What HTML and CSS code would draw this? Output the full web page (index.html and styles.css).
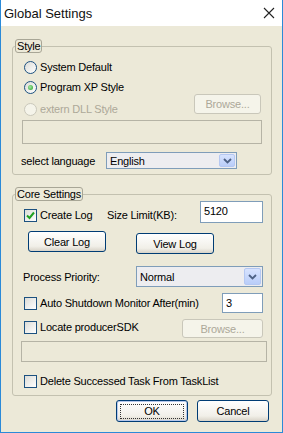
FILE: index.html
```html
<!DOCTYPE html>
<html lang="en">
<head>
  <meta charset="UTF-8">
  <meta name="viewport" content="width=device-width, initial-scale=1.0">
  <title>Global Settings</title>
  <link rel="stylesheet" href="styles.css">
</head>
<body>
  <div class="window">
    <div class="titlebar">
      <span class="title">Global Settings</span>
      <svg class="close" viewBox="0 0 12 12" width="12" height="12">
        <path d="M1 1 L11 11 M11 1 L1 11" stroke="#222" stroke-width="1.1" fill="none"/>
      </svg>
    </div>

    <div class="client">
      <fieldset class="group">
        <legend>Style</legend>
        <div class="group-body style-body">
          <label class="opt"><span class="radio"></span>System Default</label>
          <label class="opt row-gap"><span class="radio on"></span>Program XP Style</label>
          <div class="row dll-row">
            <label class="opt disabled"><span class="radio"></span>extern DLL Style</label>
            <button class="btn browse-style" disabled>Browse...</button>
          </div>
          <div class="edit disabled style-path"></div>
          <div class="row lang-row">
            <span class="lang-label">select language</span>
            <div class="combo lang-combo">
              <span class="combo-text">English</span>
              <span class="drop">
                <svg viewBox="0 0 9 6" width="9" height="6"><path d="M1 1 L4.5 4.5 L8 1" stroke="#4d6185" stroke-width="1.8" fill="none"/></svg>
              </span>
            </div>
          </div>
        </div>
      </fieldset>

      <fieldset class="group core">
        <legend>Core Settings</legend>
        <div class="group-body core-body">
          <div class="row log-row">
            <label class="opt size-opt"><span class="check on">
              <svg viewBox="0 0 11 11" width="11" height="11"><path d="M2 5.5 L4.5 8 L9 2.5" stroke="#21a121" stroke-width="2" fill="none"/></svg>
            </span>Create Log</label>
            <span class="size-label">Size Limit(KB):</span>
            <div class="edit size-edit">5120</div>
          </div>
          <div class="row btn-row">
            <button class="btn clear-log">Clear Log</button>
            <button class="btn view-log">View Log</button>
          </div>
          <div class="row prio-row">
            <span class="prio-label">Process Priority:</span>
            <div class="combo prio-combo">
              <span class="combo-text">Normal</span>
              <span class="drop">
                <svg viewBox="0 0 9 6" width="9" height="6"><path d="M1 1 L4.5 4.5 L8 1" stroke="#4d6185" stroke-width="1.8" fill="none"/></svg>
              </span>
            </div>
          </div>
          <div class="row shutdown-row">
            <label class="opt"><span class="check"></span>Auto Shutdown Monitor After(min)</label>
            <div class="edit min-edit">3</div>
          </div>
          <div class="row sdk-row">
            <label class="opt"><span class="check"></span>Locate producerSDK</label>
            <button class="btn browse-sdk" disabled>Browse...</button>
          </div>
          <div class="edit disabled sdk-path"></div>
          <label class="opt delete-opt"><span class="check"></span>Delete Successed Task From TaskList</label>
        </div>
      </fieldset>

      <div class="footer">
        <button class="btn default"><span class="focus">OK</span></button>
        <button class="btn">Cancel</button>
      </div>
    </div>
  </div>
</body>
</html>
```

FILE: styles.css
```css
* {
  box-sizing: border-box;
  margin: 0;
  padding: 0;
}

body {
  font-family: "Liberation Sans", Arial, sans-serif;
  font-size: 11px;
  letter-spacing: -0.2px;
  color: #000;
  background: #ece9d8;
}

.window {
  width: 283px;
  height: 433px;
  border: 1px solid #2b8ad8;
  border-top: 0;
  background: #ece9d8;
  display: flex;
  flex-direction: column;
}

.titlebar {
  height: 26px;
  background: #fff;
  display: flex;
  align-items: center;
  justify-content: space-between;
  padding: 0 7px 0 3px;
}

.title {
  font-size: 13px;
  letter-spacing: 0;
  color: #111;
}

.close {
  display: block;
}

.client {
  flex: 1;
  display: flex;
  flex-direction: column;
  padding-left: 11px;
}

/* group boxes */
.group {
  width: 260px;
  margin-top: 13px;
  border: 1px solid #c3c1b0;
  border-radius: 3px;
  padding: 0 2px;
}

.group legend {
  border: 1px solid #a8a696;
  border-radius: 3px;
  padding: 0 1px;
  line-height: 12px;
  height: 14px;
}

.group.core {
  margin-top: 12px;
}

.group-body {
  display: flex;
  flex-direction: column;
}

.style-body {
  padding: 7px 8px 5px 9px;
}

.core-body {
  padding: 0 6px 7px 9px;
}

.row {
  display: flex;
  align-items: flex-start;
}

/* radio / check options */
.opt {
  display: flex;
  align-items: center;
  height: 14px;
  line-height: 14px;
  white-space: nowrap;
}

.opt.disabled {
  color: #aca899;
}

.row-gap {
  margin-top: 6px;
}

.radio {
  width: 13px;
  height: 13px;
  border: 1px solid #1c5180;
  border-radius: 50%;
  background: linear-gradient(135deg, #dcdcd7, #fff);
  margin-right: 3px;
  display: flex;
  align-items: center;
  justify-content: center;
}

.radio.on::after {
  content: "";
  width: 5px;
  height: 5px;
  border-radius: 50%;
  background: radial-gradient(circle at 40% 40%, #a6e7a6, #21a121);
}

.opt.disabled .radio {
  border-color: #cac8bb;
  background: #f5f4ea;
}

.check {
  width: 13px;
  height: 13px;
  border: 1px solid #1c5180;
  background: linear-gradient(135deg, #dcdcd7, #fff);
  margin-right: 3px;
  display: flex;
  align-items: center;
  justify-content: center;
}

/* buttons */
.btn {
  font-family: inherit;
  font-size: 11px;
  letter-spacing: -0.2px;
  color: #000;
  height: 21px;
  border: 1px solid #003c74;
  border-radius: 3px;
  background: linear-gradient(#fff, #f1efe8 75%, #d8d3c8);
  display: flex;
  align-items: center;
  justify-content: center;
}

.btn:disabled {
  color: #aca899;
  border-color: #c9c7ba;
  background: #f5f4ea;
}

.btn.default {
  box-shadow: inset 0 0 0 1px #b6c8ec;
}

.btn .focus {
  border: 1px dotted #333;
  width: 64px;
  height: 15px;
  line-height: 13px;
  text-align: center;
}

/* edits and combos */
.edit {
  border: 1px solid #7f9db9;
  background: #fff;
  padding: 2px 3px;
  line-height: 14px;
}

.edit.disabled {
  border-color: #b5b3a5;
  background: #ece9d8;
}

.combo {
  border: 1px solid #7f9db9;
  background: #ededf0;
  display: flex;
  align-items: stretch;
  justify-content: space-between;
  padding: 1px;
}

.combo-text {
  padding-left: 2px;
  display: flex;
  align-items: center;
}

.drop {
  width: 17px;
  border-radius: 2px;
  background: linear-gradient(#d7e3fe, #b9cdf9);
  border: 1px solid #b5c8f2;
  display: flex;
  align-items: center;
  justify-content: center;
}

/* style group */
.dll-row {
  justify-content: space-between;
}

.dll-row .opt {
  margin-top: 8px;
}

.browse-style {
  width: 67px;
  height: 20px;
}

.style-path {
  margin: 4px -1px 0 -2px;
  height: 24px;
}

.lang-row {
  margin-top: 8px;
  align-items: center;
}

.lang-label {
  width: 85px;
  margin-left: -3px;
}

.lang-combo {
  width: 131px;
  height: 17px;
}

.lang-combo .drop {
  width: 16px;
}

/* core group */
.log-row {
  height: 22px;
}

.log-row .opt {
  margin-top: 7px;
}

.size-opt {
  width: 83px;
}

.size-label {
  margin-top: 7px;
  line-height: 14px;
}

.size-edit {
  margin-left: auto;
  width: 63px;
  height: 22px;
}

.btn-row {
  margin-top: 8px;
}

.clear-log {
  width: 78px;
  margin-left: 4px;
}

.view-log {
  width: 78px;
  margin-left: 30px;
  margin-top: 2px;
}

.prio-row {
  margin-top: 12px;
  align-items: center;
}

.prio-label {
  margin-left: -1px;
}

.prio-combo {
  margin-left: auto;
  width: 127px;
  height: 21px;
}

.shutdown-row {
  margin-top: 6px;
  justify-content: space-between;
}

.shutdown-row .opt {
  margin-top: 3px;
}

.min-edit {
  width: 41px;
  height: 20px;
}

.sdk-row {
  margin-top: 6px;
  justify-content: space-between;
}

.sdk-row .opt {
  margin-top: 1px;
}

.browse-sdk {
  width: 81px;
  height: 19px;
}

.sdk-path {
  margin: 3px -4px 0 -3px;
  height: 21px;
}

.delete-opt {
  margin-top: 12px;
}

/* dialog buttons */
.footer {
  display: flex;
  justify-content: flex-end;
  gap: 9px;
  margin-top: 4px;
  padding-right: 13px;
}

.footer .btn {
  width: 72px;
  height: 22px;
}
```
